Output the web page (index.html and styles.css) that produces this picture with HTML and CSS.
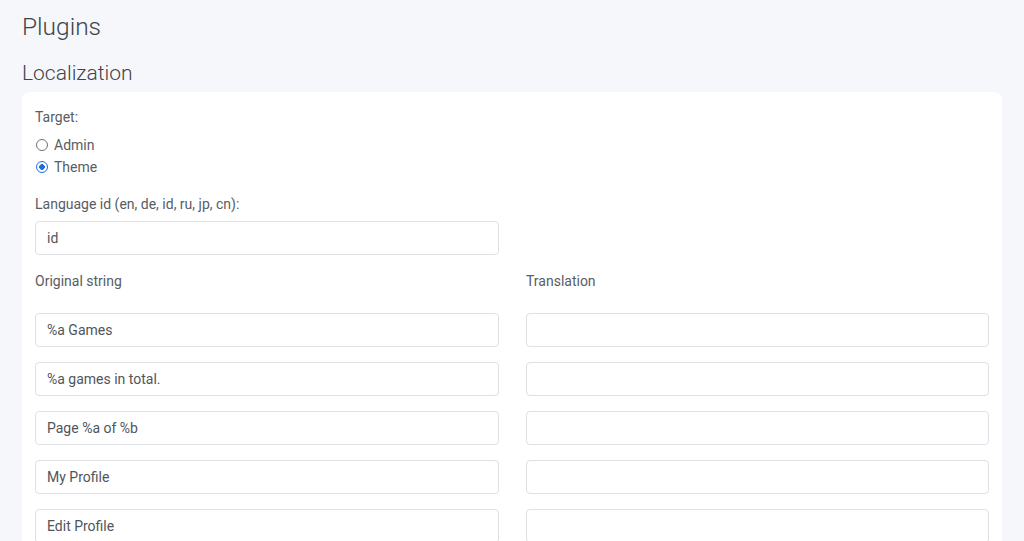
FILE: index.html
```html
<!DOCTYPE html>
<html>
<head>
<meta charset="utf-8">
<link rel="stylesheet" href="styles.css">
</head>
<body>
<div class="page">
  <h1 class="title">Plugins</h1>
  <h2 class="subtitle">Localization</h2>
  <div class="card">
    <div class="label">Target:</div>
    <div class="radios">
      <label class="radio"><input type="radio" name="t"><span>Admin</span></label>
      <label class="radio"><input type="radio" name="t" checked><span>Theme</span></label>
    </div>
    <div class="label lang">Language id (en, de, id, ru, jp, cn):</div>
    <div class="half"><input class="field" type="text" value="id"></div>
    <div class="grid">
      <div class="label col-head">Original string</div>
      <div class="label col-head">Translation</div>
      <input class="field" type="text" value="%a Games">
      <input class="field" type="text" value="">
      <input class="field" type="text" value="%a games in total.">
      <input class="field" type="text" value="">
      <input class="field" type="text" value="Page %a of %b">
      <input class="field" type="text" value="">
      <input class="field" type="text" value="My Profile">
      <input class="field" type="text" value="">
      <input class="field" type="text" value="Edit Profile">
      <input class="field" type="text" value="">
    </div>
  </div>
</div>
</body>
</html>
```
FILE: styles.css
```css
html, body {
  margin: 0;
  padding: 0;
  background: #f5f7fb;
  font-family: Roboto, "Liberation Sans", sans-serif;
  height: 100%;
  overflow: hidden;
}
.page {
  padding: 13px 22px 0 22px;
}
.title {
  margin: 0;
  font-size: 24.5px;
  line-height: 28px;
  font-weight: 300;
  color: #3f444b;
}
.subtitle {
  margin: 20px 0 7px 0;
  font-size: 21px;
  line-height: 24px;
  font-weight: 300;
  color: #3f444b;
}
.card {
  background: #fff;
  border-radius: 8px;
  padding: 15px 14px 0 13px;
  height: 600px;
}
.label {
  font-size: 14px;
  line-height: 20px;
  color: #585d63;
}
.radios {
  margin-top: 7px;
  display: flex;
  flex-direction: column;
}
.radio {
  display: flex;
  align-items: center;
  height: 22px;
  font-size: 14px;
  color: #585d63;
}
.radio input {
  appearance: none;
  -webkit-appearance: none;
  margin: 0 6px 0 1px;
  width: 12px;
  height: 12px;
  border: 1.5px solid #6c7178;
  border-radius: 50%;
  box-sizing: border-box;
  background: #fff;
}
.radio input:checked {
  border-color: #1b6ee8;
  background: radial-gradient(circle, #1b6ee8 0 2.6px, #fff 3px);
}
.lang {
  margin-top: 16px;
}
.half {
  margin-top: 7px;
  width: 464px;
}
.field {
  display: block;
  box-sizing: border-box;
  width: 100%;
  height: 34px;
  margin: 0;
  border: 1px solid #dde0e5;
  border-radius: 4px;
  padding: 0 11px;
  font-family: Roboto, "Liberation Sans", sans-serif;
  font-size: 14px;
  color: #50555b;
  background: #fff;
  outline: none;
}
.grid {
  margin-top: 16px;
  display: grid;
  grid-template-columns: 464px 463px;
  column-gap: 27px;
  row-gap: 15px;
}
.col-head {
  margin-bottom: 7px;
}
```
